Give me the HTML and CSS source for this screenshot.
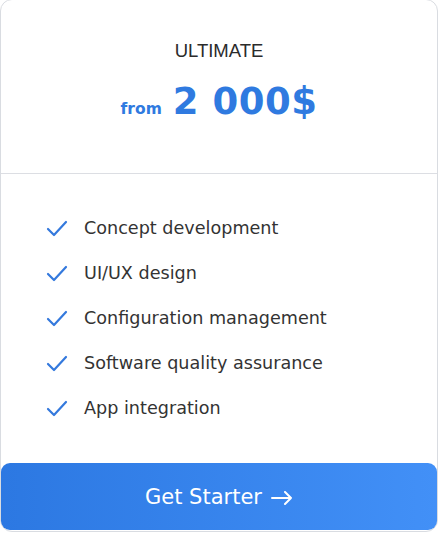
FILE: index.html
```html
<!DOCTYPE html>
<html>
<head>
<meta charset="utf-8">
<link rel="stylesheet" href="styles.css">
</head>
<body>
<div class="card">
  <div class="head">
    <div class="plan">ULTIMATE</div>
    <div class="price"><span class="from">from</span><span class="amount">2 000$</span></div>
  </div>
  <ul class="features">
    <li><svg class="check" viewBox="0 0 24 24"><path d="M3 13l6 6L21 6"/></svg><span>Concept development</span></li>
    <li><svg class="check" viewBox="0 0 24 24"><path d="M3 13l6 6L21 6"/></svg><span>UI/UX design</span></li>
    <li><svg class="check" viewBox="0 0 24 24"><path d="M3 13l6 6L21 6"/></svg><span>Configuration management</span></li>
    <li><svg class="check" viewBox="0 0 24 24"><path d="M3 13l6 6L21 6"/></svg><span>Software quality assurance</span></li>
    <li><svg class="check" viewBox="0 0 24 24"><path d="M3 13l6 6L21 6"/></svg><span>App integration</span></li>
  </ul>
  <button class="cta"><span>Get Starter</span><svg class="arrow" viewBox="0 0 22 14"><path d="M1 7h19M14 1l6 6-6 6"/></svg></button>
</div>
</body>
</html>
```
FILE: styles.css
```css
html, body { margin: 0; padding: 0; background: #fff; }
body { width: 440px; height: 533px; overflow: hidden; }
.card {
  box-sizing: border-box;
  width: 438px;
  height: 533px;
  margin-top: -1px;
  border: 1px solid #d9dce1;
  border-radius: 12px;
  background: #fff;
  display: flex;
  flex-direction: column;
}
.head {
  height: 174px;
  box-sizing: border-box;
  border-bottom: 1px solid #dcdee3;
  display: flex;
  flex-direction: column;
  align-items: center;
  padding-top: 40px;
}
.plan {
  font-family: "Liberation Sans", Arial, sans-serif;
  font-size: 18.5px;
  color: #2b2b2b;
}
.price {
  margin-top: 18px;
  display: flex;
  align-items: baseline;
  color: #2f7ae0;
  font-family: "DejaVu Sans", sans-serif;
  font-weight: bold;
}
.from { font-size: 15.5px; margin-right: 11px; }
.amount { font-size: 37px; letter-spacing: 0.5px; }
.features {
  list-style: none;
  margin: 0;
  padding: 31px 0 0 44px;
  flex: 1;
}
.features li {
  display: flex;
  align-items: center;
  height: 45px;
  font-family: "DejaVu Sans", sans-serif;
  font-size: 17.6px;
  color: #333;
}
.check {
  width: 24px;
  height: 24px;
  margin-right: 15px;
  fill: none;
  stroke: #3479dd;
  stroke-width: 2.2;
  stroke-linecap: round;
  stroke-linejoin: round;
}
.cta {
  margin: 0 0 1px 0;
  height: 67px;
  border: none;
  border-radius: 9px;
  background: linear-gradient(90deg, #2c78e2, #4290f7);
  color: #fff;
  font-family: "DejaVu Sans", sans-serif;
  font-size: 21px;
  cursor: pointer;
  display: flex;
  align-items: center;
  justify-content: center;
  gap: 9px;
}
.arrow {
  width: 22px;
  height: 14px;
  margin-top: 2px;
  fill: none;
  stroke: #fff;
  stroke-width: 2;
  stroke-linecap: round;
  stroke-linejoin: round;
}
```
